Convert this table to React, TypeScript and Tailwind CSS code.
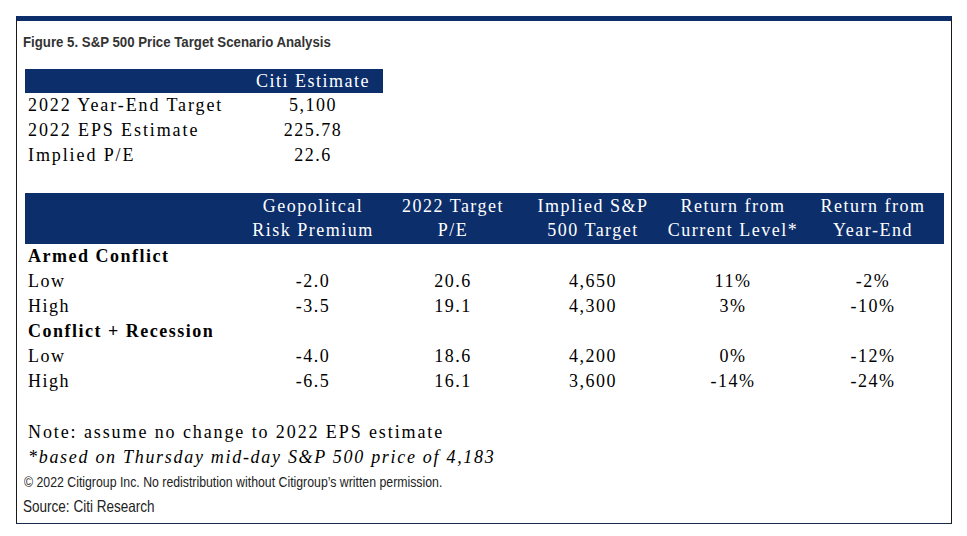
import React from 'react';

const serif = "font-['Liberation_Serif','Times_New_Roman',serif]";

const summary = [
  { label: '2022 Year-End Target', value: '5,100' },
  { label: '2022 EPS Estimate', value: '225.78' },
  { label: 'Implied P/E', value: '22.6' },
];

const headers = [
  ['Geopolitcal', 'Risk Premium'],
  ['2022 Target', 'P/E'],
  ['Implied S&P', '500 Target'],
  ['Return from', 'Current Level*'],
  ['Return from', 'Year-End'],
];

type Row = { label: string; bold?: boolean; cells?: string[] };

const rows: Row[] = [
  { label: 'Armed Conflict', bold: true },
  { label: 'Low', cells: ['-2.0', '20.6', '4,650', '11%', '-2%'] },
  { label: 'High', cells: ['-3.5', '19.1', '4,300', '3%', '-10%'] },
  { label: 'Conflict + Recession', bold: true },
  { label: 'Low', cells: ['-4.0', '18.6', '4,200', '0%', '-12%'] },
  { label: 'High', cells: ['-6.5', '16.1', '3,600', '-14%', '-24%'] },
];

export default function App() {
  return (
    <div className="w-[967px] h-[536px] bg-white pt-[16px] pl-[16px]">
      {/* Figure frame */}
      <div className="w-[936px] h-[508px] border-t-[5px] border-t-[#0c2e6b] border-l border-r border-l-[#1a1a1a] border-r-[#1a1a1a] border-b border-b-[#1b2c4a] flex flex-col">
        <div className="pl-[6px] mt-[13px] h-[16px] leading-[16px] text-[14px] font-bold text-[#333] font-['Liberation_Sans',Arial,sans-serif] whitespace-nowrap">
          <span className="inline-block origin-left scale-x-[0.945]">Figure 5. S&amp;P 500 Price Target Scenario Analysis</span>
        </div>

        {/* Summary table */}
        <div className={`ml-[8px] mt-[19px] w-[358px] text-[18px] tracking-[1.5px] text-black ${serif}`}>
          <div className="grid grid-cols-[218px_140px] h-[24px] leading-[24px] bg-[#0c2e6b] text-white">
            <div />
            <div className="text-center">Citi Estimate</div>
          </div>
          {summary.map((r) => (
            <div key={r.label} className="grid grid-cols-[218px_140px] h-[25px] leading-[25px]">
              <div className="pl-[3px] tracking-[1.9px]">{r.label}</div>
              <div className="text-center">{r.value}</div>
            </div>
          ))}
        </div>

        {/* Scenario table */}
        <div className={`ml-[8px] mt-[25px] w-[919px] text-[18px] tracking-[1.5px] text-black ${serif}`}>
          <div className="grid grid-cols-[218px_repeat(5,140px)_1px] h-[51px] pt-[1px] bg-[#0c2e6b] text-white leading-[24px]">
            <div />
            {headers.map((h, i) => (
              <div key={i} className="text-center flex flex-col">
                <span>{h[0]}</span>
                <span>{h[1]}</span>
              </div>
            ))}
            <div />
          </div>
          {rows.map((r, i) => (
            <div key={i} className="grid grid-cols-[218px_repeat(5,140px)] h-[25px] leading-[25px]">
              <div className={r.bold ? 'pl-[3px] font-bold' : 'pl-[3px]'}>{r.label}</div>
              {(r.cells ?? ['', '', '', '', '']).map((c, j) => (
                <div key={j} className="text-center">{c}</div>
              ))}
            </div>
          ))}
        </div>

        {/* Notes */}
        <div className={`ml-[11px] mt-[26px] text-[18px] text-black ${serif}`}>
          <div className="h-[25px] leading-[25px] tracking-[1.9px]">Note: assume no change to 2022 EPS estimate</div>
          <div className="h-[25px] leading-[25px] italic tracking-[1.7px]">*based on Thursday mid-day S&amp;P 500 price of 4,183</div>
        </div>

        <div className="ml-[7px] h-[24px] leading-[24px] text-[15px] text-[#222] font-['Liberation_Sans',Arial,sans-serif] whitespace-nowrap">
          <span className="inline-block origin-left scale-x-[0.82]">
            © 2022 Citigroup Inc. No redistribution without Citigroup’s written permission.
          </span>
        </div>
        <div className="ml-[6px] h-[24px] leading-[24px] text-[16.5px] text-[#222] font-['Liberation_Sans',Arial,sans-serif] whitespace-nowrap">
          <span className="inline-block origin-left scale-x-[0.82]">Source: Citi Research</span>
        </div>
      </div>
    </div>
  );
}
